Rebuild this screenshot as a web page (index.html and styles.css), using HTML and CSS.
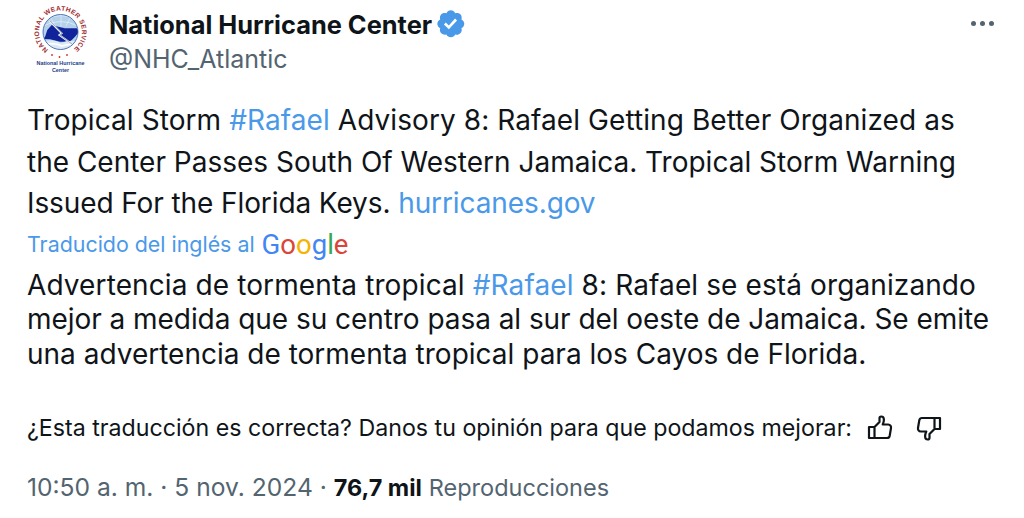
FILE: index.html
```html
<!DOCTYPE html>
<html lang="es">
<head>
<meta charset="utf-8">
<title>National Hurricane Center</title>
<link rel="stylesheet" href="styles.css">
</head>
<body>
<main class="tweet">
  <header class="head">
    <svg class="avatar" viewBox="0 0 64 72" aria-hidden="true">
      <defs>
        <path id="arc" d="M20.200 41.600 A21.500 21.500 0 1 1 44.800 41.600"/>
        <clipPath id="globe"><circle cx="32.500" cy="24" r="17.500"/></clipPath>
      </defs>
      <text class="ring"><textPath href="#arc" textLength="107">NATIONAL WEATHER SERVICE</textPath></text>
      <g clip-path="url(#globe)">
        <rect x="14" y="6" width="38" height="36" fill="#b4d0ea"/>
        <path d="M17 12 Q33 3 48 12 M15 18 Q33 9 50 18" fill="none" stroke="#eaf3fb" stroke-width=".7"/>
        <path d="M33 7 V20 M23 10 L27 18 M42 10 L38 18" fill="none" stroke="#eaf3fb" stroke-width=".6"/>
        <path d="M15 31 L17 29 L19.300 22 L23.700 17 L30.300 18.700 L37 20.300 L48.700 20.300 L51.300 23.700 L47 28.700 L42 33.700 L32 33.700 L22 31.300 Z" fill="#10239a"/>
        <path d="M14 34 Q24 30 33 35 Q42 31 52 34 L52 42 L14 42 Z" fill="#dbe8f5"/>
        <path d="M16 37 Q26 34 34 38 Q42 35 50 37" fill="none" stroke="#fff" stroke-width="1.500"/>
        <path d="M21.300 12.700 L33.700 25.300 L31.300 27 L45.300 37" fill="none" stroke="#e8f0f9" stroke-width="1.800"/>
        <path d="M21.800 12.700 L34.200 25.300 L31.800 27 L45.300 37" fill="none" stroke="#57657c" stroke-width=".5"/>
      </g>
      <circle cx="32.500" cy="24" r="17.500" fill="none" stroke="#2f5ba6" stroke-width=".8"/>
      <circle cx="24" cy="47" r=".9" fill="#c8342b"/><circle cx="31.500" cy="49" r=".9" fill="#c8342b"/><circle cx="39" cy="47" r=".9" fill="#c8342b"/>
      <text class="nhc" x="32.500" y="56.500">National Hurricane</text>
      <text class="nhc" x="32.500" y="63.500">Center</text>
    </svg>
    <div class="names">
      <div class="name-row">
        <span class="name">National Hurricane Center</span>
        <svg class="badge" viewBox="0 0 22 22" aria-hidden="true"><path fill="#4a99e9" d="M20.396 11c-.018-.646-.215-1.275-.57-1.816-.354-.54-.852-.972-1.438-1.246.223-.607.27-1.264.14-1.897-.131-.634-.437-1.218-.882-1.687-.47-.445-1.053-.75-1.687-.882-.633-.13-1.29-.083-1.897.14-.273-.587-.704-1.086-1.245-1.44S11.647 1.62 11 1.604c-.646.017-1.273.213-1.813.568s-.969.854-1.24 1.44c-.608-.223-1.267-.272-1.902-.14-.635.13-1.22.436-1.69.882-.445.47-.749 1.055-.878 1.688-.13.633-.08 1.29.144 1.896-.587.274-1.087.705-1.443 1.245-.356.54-.555 1.17-.574 1.817.02.647.218 1.276.574 1.817.356.54.856.972 1.443 1.245-.224.606-.274 1.263-.144 1.896.13.634.433 1.218.877 1.688.47.443 1.054.747 1.687.878.633.132 1.29.084 1.897-.136.274.586.705 1.084 1.246 1.439.54.354 1.17.551 1.816.569.647-.016 1.276-.213 1.817-.567s.972-.854 1.245-1.44c.604.239 1.266.296 1.903.164.636-.132 1.22-.447 1.68-.907.46-.46.776-1.044.908-1.681s.075-1.299-.165-1.903c.586-.274 1.084-.705 1.439-1.246.354-.54.551-1.17.569-1.816z"/><path fill="#fff" d="M9.662 14.850l-3.429-3.428 1.293-1.302 2.072 2.072 4.400-4.794 1.347 1.246z"/></svg>
      </div>
      <div class="handle">@NHC_Atlantic</div>
    </div>
    <div class="more" aria-hidden="true"><i></i><i></i><i></i></div>
  </header>

  <p class="original"><span class="wide">Tropical Storm <a>#Rafael</a> Advisory 8: Rafael Getting Better Organized as</span><br>the Center Passes South Of Western Jamaica. Tropical Storm Warning<br><span class="tight">Issued For the Florida Keys. <a>hurricanes.gov</a></span></p>

  <div class="translated-by">Traducido del inglés al <span class="google"><b class="gb">G</b><b class="gr">o</b><b class="gy">o</b><b class="gb">g</b><b class="gg">l</b><b class="gr">e</b></span></div>

  <p class="translation"><span class="wider">Advertencia de tormenta tropical <a>#Rafael</a> 8: Rafael se está organizando</span><br><span class="snug">mejor a medida que su centro pasa al sur del oeste de Jamaica. Se emite</span><br>una advertencia de tormenta tropical para los Cayos de Florida.</p>

  <div class="feedback">
    <span>¿Esta traducción es correcta? Danos tu opinión para que podamos mejorar:</span>
    <svg class="thumb" viewBox="0 0 26 26" aria-hidden="true"><path d="M2 12h5.500v11H2zM7.500 12l5-5V3.200c0-1 .7-1.700 1.700-1.700 1.600 0 2.700 1.500 2.700 3.300 0 1.500-.5 3.200-1.200 4.700h5.500c2 0 3.100 1.700 2.800 3.500l-1.300 7.700c-.3 1.400-1.200 2.300-2.700 2.300H7.500"/></svg>
    <svg class="thumb" viewBox="0 0 26 26" aria-hidden="true"><path d="M24 3h-5.500v11H24zM18.500 14l-5 5v3.800c0 1-.7 1.700-1.700 1.700-1.600 0-2.700-1.500-2.700-3.300 0-1.500.5-3.200 1.200-4.700H4.800c-2 0-3.100-1.700-2.800-3.500l1.300-7.700C3.600 3.900 4.500 3 6 3h12.500"/></svg>
  </div>

  <footer class="meta">10:50 a. m. · 5 nov. 2024 · <b>76,7 mil</b> <span class="views">Reproducciones</span></footer>
</main>
</body>
</html>
```

FILE: styles.css
```css
* { box-sizing: border-box; }
html, body { margin: 0; padding: 0; background: #fff; }
body { width: 1024px; height: 518px; overflow: hidden; font-family: Inter, "Liberation Sans", sans-serif; color: #0f1419; }
.tweet { padding: 8px 27px 0 27px; }
.head { display: flex; align-items: flex-start; height: 78px; }
.avatar { width: 64px; height: 72px; margin: 0 17px 0 1px; flex: none; overflow: visible; }
.ring { font: 700 6.600px "Liberation Sans", sans-serif; fill: #a02c30; }
.nhc { font: 700 5.400px "Liberation Sans", sans-serif; fill: #22408c; text-anchor: middle; }
.names { flex: 1; }
.name-row { display: flex; align-items: center; gap: 3px; height: 32px; }
.name { font-size: 25.400px; font-weight: 700; }
.badge { width: 31.600px; height: 31.600px; }
.handle { font-size: 25px; color: #536471; margin-top: 4px; }
.more { display: flex; gap: 4px; padding: 13px 3px 0 0; }
.more i { width: 5px; height: 5px; border-radius: 50%; background: #536471; }
a { color: #4a99e9; }
.original { margin: 14px 0 0; font-size: 28px; line-height: 41.500px; }
.wide { letter-spacing: .08px; }
.wider { letter-spacing: .11px; }
.snug { letter-spacing: -.05px; }
.tight { letter-spacing: -.1px; }
.translated-by { margin-top: 3.500px; display: flex; align-items: center; gap: 7px; height: 32px; font-size: 21.400px; color: #4a99e9; }
.google { font: 400 27.500px Roboto, "Liberation Sans", sans-serif; }
.google b { font-weight: 400; }
.gb { color: #4285f4; } .gr { color: #db4437; } .gy { color: #f4b400; } .gg { color: #34a853; }
.translation { margin: 7.500px 0 0; font-size: 28px; line-height: 34.500px; }
.feedback { margin-top: 41.500px; display: flex; align-items: center; height: 30px; font-size: 23.200px; }
.thumb { width: 26px; height: 26px; margin-left: 15px; fill: none; stroke: #0f1419; stroke-width: 2.200; stroke-linejoin: round; }
.thumb + .thumb { margin-left: 23px; }
.meta { margin-top: 29px; font-size: 24.600px; color: #536471; }
.meta b { color: #0f1419; font-size: 23.400px; font-weight: 700; }
.views { font-size: 23.500px; }
```
